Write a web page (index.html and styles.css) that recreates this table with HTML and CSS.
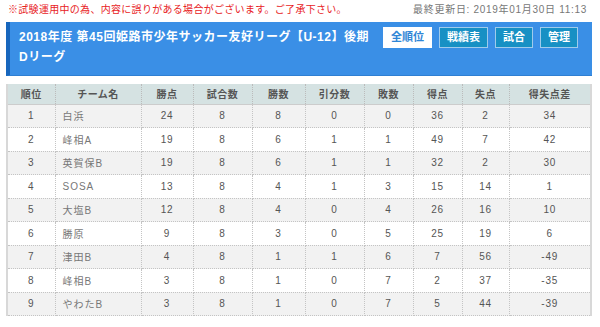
FILE: index.html
```html
<!DOCTYPE html>
<html lang="ja">
<head>
<meta charset="utf-8">
<link rel="stylesheet" href="styles.css">
</head>
<body>
<div class="page">
  <div class="topbar">
    <span class="notice">※試験運用中の為、内容に誤りがある場合がございます。ご了承下さい。</span>
    <span class="updated">最終更新日: 2019年01月30日 11:13</span>
  </div>
  <div class="head">
    <h1 class="title">2018年度 第45回姫路市少年サッカー友好リーグ【U-12】後期<br>Dリーグ</h1>
    <div class="btns">
      <span class="btn btn-active">全順位</span>
      <span class="btn">戦績表</span>
      <span class="btn">試合</span>
      <span class="btn">管理</span>
    </div>
  </div>
  <table class="standings">
    <colgroup>
      <col class="c-rank"><col class="c-team"><col class="c-pts"><col class="c-gp"><col class="c-w"><col class="c-d"><col class="c-l"><col class="c-gf"><col class="c-ga"><col class="c-gd">
    </colgroup>
    <thead>
      <tr><th>順位</th><th>チーム名</th><th>勝点</th><th>試合数</th><th>勝数</th><th>引分数</th><th>敗数</th><th>得点</th><th>失点</th><th>得失点差</th></tr>
    </thead>
    <tbody>
      <tr><td>1</td><td class="team">白浜</td><td>24</td><td>8</td><td>8</td><td>0</td><td>0</td><td>36</td><td>2</td><td>34</td></tr>
      <tr><td>2</td><td class="team">峰相A</td><td>19</td><td>8</td><td>6</td><td>1</td><td>1</td><td>49</td><td>7</td><td>42</td></tr>
      <tr><td>3</td><td class="team">英賀保B</td><td>19</td><td>8</td><td>6</td><td>1</td><td>1</td><td>32</td><td>2</td><td>30</td></tr>
      <tr><td>4</td><td class="team">SOSA</td><td>13</td><td>8</td><td>4</td><td>1</td><td>3</td><td>15</td><td>14</td><td>1</td></tr>
      <tr><td>5</td><td class="team">大塩B</td><td>12</td><td>8</td><td>4</td><td>0</td><td>4</td><td>26</td><td>16</td><td>10</td></tr>
      <tr><td>6</td><td class="team">勝原</td><td>9</td><td>8</td><td>3</td><td>0</td><td>5</td><td>25</td><td>19</td><td>6</td></tr>
      <tr><td>7</td><td class="team">津田B</td><td>4</td><td>8</td><td>1</td><td>1</td><td>6</td><td>7</td><td>56</td><td>-49</td></tr>
      <tr><td>8</td><td class="team">峰相B</td><td>3</td><td>8</td><td>1</td><td>0</td><td>7</td><td>2</td><td>37</td><td>-35</td></tr>
      <tr><td>9</td><td class="team">やわたB</td><td>3</td><td>8</td><td>1</td><td>0</td><td>7</td><td>5</td><td>44</td><td>-39</td></tr>
    </tbody>
  </table>
</div>
</body>
</html>
```
FILE: styles.css
```css
* { box-sizing: border-box; }
html, body { margin: 0; padding: 0; background: #fff; }
body {
  font-family: "Liberation Sans", "Noto Sans CJK JP", sans-serif;
  color: #555;
  width: 600px;
}
.page { padding: 0 8px 0 6px; }
.topbar {
  display: flex;
  justify-content: space-between;
  align-items: center;
  height: 22px;
  padding: 0 5px 2px 2px;
  font-size: 10px;
  line-height: 12px;
}
.notice { color: #e8221e; letter-spacing: 0.3px; }
.updated { color: #777; letter-spacing: 0.7px; }
.head {
  display: flex;
  justify-content: space-between;
  align-items: flex-start;
  background: #3a8fe6;
  border-left: 4px solid #1766bd;
  border-bottom: 1px solid #2f7fd2;
  padding: 5px 14px 8px 9px;
  height: 54px;
}
.title {
  margin: 0;
  color: #fff;
  font-size: 12px;
  font-weight: bold;
  line-height: 20px;
  letter-spacing: 0.5px;
}
.btns { display: flex; gap: 7px; }
.btn {
  display: block;
  height: 21px;
  line-height: 19px;
  padding: 0 7px;
  border: 1px solid #9fcbeb;
  background: #1790c4;
  color: #fff;
  font-size: 11px;
  font-weight: bold;
}
.btn-active { background: #fff; color: #2f86d6; border-color: #fff; }
.standings {
  margin-top: 8px;
  width: 586px;
  border-collapse: collapse;
  table-layout: fixed;
  border-left: 2px solid #d8d8d8;
  border-right: 2px solid #d8d8d8;
  font-size: 10px;
}
.c-rank { width: 48px; }
.c-team { width: 86px; }
.c-pts { width: 52px; }
.c-gp { width: 59px; }
.c-w { width: 53px; }
.c-d { width: 59px; }
.c-l { width: 49px; }
.c-gf { width: 49px; }
.c-ga { width: 47px; }
.c-gd { width: 82px; }
.standings th {
  background: #d5e2e2;
  color: #555;
  font-weight: bold;
  height: 20px;
  padding: 0;
  text-align: center;
  letter-spacing: 0.5px;
  border-right: 1px dotted #bbb;
  border-bottom: 1px solid #ccc;
}
.standings td {
  height: 23.5px;
  padding: 0;
  text-align: center;
  color: #555;
  letter-spacing: 0.8px;
  border-right: 1px dotted #c4c4c4;
  border-bottom: 1px dotted #c4c4c4;
}
.standings th:last-child, .standings td:last-child { border-right: none; }
.standings tbody tr:nth-child(odd) td { background: #f2f2f2; }
.standings td.team { text-align: left; padding-left: 7px; color: #777; letter-spacing: 1px; }
```
